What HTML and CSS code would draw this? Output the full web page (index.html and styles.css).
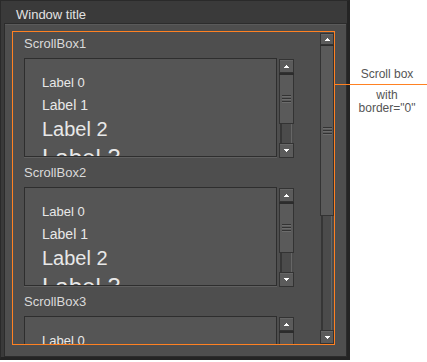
FILE: index.html
```html
<!DOCTYPE html>
<html lang="en">
<head>
    <meta charset="UTF-8" />
    <title>Scroll box</title>
    <link rel="stylesheet" href="styles.css">
</head>
<body>

<div class="window">
    <div class="title">Window title</div>
    <div class="panel">
        <!-- outer scroll box, border="0" (orange frame is the annotation highlight) -->
        <div class="scroll-box">
            <div class="viewport">
                <div class="content">

                    <div class="section">
                        <div class="caption">ScrollBox1</div>
                        <div class="box-row">
                            <div class="box">
                                <div class="label l0">Label 0</div>
                                <div class="label l1">Label 1</div>
                                <div class="label l2">Label 2</div>
                                <div class="label l3">Label 3</div>
                            </div>
                            <div class="sbar">
                                <div class="btn"><svg width="5" height="3" viewBox="0 0 5 3"><path d="M2 0h1v1h1v1h1v1H0V2h1V1h1z" fill="#fff"/></svg></div>
                                <div class="sep"></div>
                                <div class="thumb"><div class="grip"></div></div>
                                <div class="track"></div>
                                <div class="btn down"><svg width="5" height="3" viewBox="0 0 5 3"><path d="M0 0h5v1H4v1H3v1H2V2H1V1H0z" fill="#fff"/></svg></div>
                            </div>
                        </div>
                    </div>

                    <div class="section">
                        <div class="caption">ScrollBox2</div>
                        <div class="box-row">
                            <div class="box">
                                <div class="label l0">Label 0</div>
                                <div class="label l1">Label 1</div>
                                <div class="label l2">Label 2</div>
                                <div class="label l3">Label 3</div>
                            </div>
                            <div class="sbar">
                                <div class="btn"><svg width="5" height="3" viewBox="0 0 5 3"><path d="M2 0h1v1h1v1h1v1H0V2h1V1h1z" fill="#fff"/></svg></div>
                                <div class="sep"></div>
                                <div class="thumb"><div class="grip"></div></div>
                                <div class="track"></div>
                                <div class="btn down"><svg width="5" height="3" viewBox="0 0 5 3"><path d="M0 0h5v1H4v1H3v1H2V2H1V1H0z" fill="#fff"/></svg></div>
                            </div>
                        </div>
                    </div>

                    <div class="section">
                        <div class="caption">ScrollBox3</div>
                        <div class="box-row">
                            <div class="box">
                                <div class="label l0">Label 0</div>
                                <div class="label l1">Label 1</div>
                                <div class="label l2">Label 2</div>
                                <div class="label l3">Label 3</div>
                            </div>
                            <div class="sbar">
                                <div class="btn"><svg width="5" height="3" viewBox="0 0 5 3"><path d="M2 0h1v1h1v1h1v1H0V2h1V1h1z" fill="#fff"/></svg></div>
                                <div class="sep"></div>
                                <div class="thumb"><div class="grip"></div></div>
                                <div class="track"></div>
                                <div class="btn down"><svg width="5" height="3" viewBox="0 0 5 3"><path d="M0 0h5v1H4v1H3v1H2V2H1V1H0z" fill="#fff"/></svg></div>
                            </div>
                        </div>
                    </div>

                </div>
            </div>
            <div class="sbar outer">
                <div class="btn"><svg width="5" height="3" viewBox="0 0 5 3"><path d="M2 0h1v1h1v1h1v1H0V2h1V1h1z" fill="#fff"/></svg></div>
                <div class="sep"></div>
                <div class="thumb"><div class="grip"></div></div>
                <div class="track"></div>
                <div class="btn down"><svg width="5" height="3" viewBox="0 0 5 3"><path d="M0 0h5v1H4v1H3v1H2V2H1V1H0z" fill="#fff"/></svg></div>
            </div>
        </div>
    </div>
</div>

<!-- annotation -->
<div class="note">
    <div class="note-title">Scroll box</div>
    <div class="note-line"></div>
    <div class="note-text">with<br>border="0"</div>
</div>

</body>
</html>
```

FILE: styles.css
```css
body {
    margin: 0;
    background: #fff;
    font-family: "Liberation Sans", Arial, sans-serif;
}
.window {
    width: 346px;
    height: 356px;
    background: #3a3a3a;
    border: 1px solid #2a2a2a;
    border-right: 3px solid #242424;
    border-bottom: 3px solid #242424;
}
.title {
    height: 22px;
    box-sizing: border-box;
    padding: 5px 15px 0;
    line-height: 17px;
    font-size: 13px;
    color: #e2e2e2;
}
.panel {
    width: 343px;
    height: 334px;
    box-sizing: border-box;
    margin-left: 3px;
    padding: 7px;
    background: #4e4e4e;
    border: 1px solid #2c2c2c;
    box-shadow: inset 0 1px 0 #5a5a5a;
}
.scroll-box {
    width: 322px;
    height: 314px;
    box-sizing: border-box;
    display: flex;
    border: 1px solid #ff8122;
    border-right: none;
    position: relative;
}
.scroll-box::after {
    content: "";
    position: absolute;
    right: -1px;
    top: -1px;
    bottom: -1px;
    width: 1px;
    background: #ff8122;
}
.viewport {
    flex: 1;
    overflow: hidden;
}
.content {
    margin-top: -3px;
}
.caption {
    height: 29px;
    line-height: 29px;
    padding-left: 11px;
    font-size: 13px;
    color: #dadada;
}
.box-row {
    display: flex;
    margin-left: 11px;
    height: 100px;
}
.box {
    width: 253px;
    height: 99px;
    box-sizing: border-box;
    border: 1px solid #2e2e2e;
    background: #555555;
    box-shadow: 0 1px 0 #606060;
    padding: 12px 0 0 17px;
    overflow: hidden;
    color: #e8e8e8;
    white-space: nowrap;
}
.l0 { font-size: 13px; line-height: 23px; }
.l1 { font-size: 14px; line-height: 22px; }
.l2 { font-size: 20px; line-height: 26px; }
.l3 { font-size: 24px; line-height: 31px; }

/* scrollbars */
.sbar {
    width: 15px;
    height: 99px;
    margin: 1px 0 0 2px;
    display: flex;
    flex-direction: column;
}
.btn {
    height: 14px;
    box-sizing: border-box;
    background: #5b5b5b;
    border: 1px solid #333;
    box-shadow: inset 0 1px 0 #666;
    display: flex;
    align-items: center;
    justify-content: center;
}
.btn svg {
    display: block;
}
.btn.down {
    height: 15px;
}
.sep {
    height: 2px;
    background: #2c2c2c;
}
.thumb {
    height: 49px;
    box-sizing: border-box;
    background: #5a5a5a;
    border: 1px solid #333;
    border-top: none;
    display: flex;
    align-items: center;
    justify-content: center;
}
.grip {
    width: 9px;
    height: 8px;
    background: repeating-linear-gradient(to bottom, #333 0 1px, #6c6c6c 1px 2px, #5a5a5a 2px 3px);
}
.track {
    flex: 1;
    border-left: 2px solid #363636;
    margin-left: 1px;
    background: linear-gradient(to left, #4b4b4b 0 2px, #666 2px 3px, #4b4b4b 3px);
}
.sbar.outer {
    width: 14px;
    height: 312px;
    margin: 0;
    padding-top: 1px;
    box-sizing: border-box;
}
.sbar.outer .btn {
    height: 12px;
}
.sbar.outer .btn.down {
    height: 14px;
}
.sbar.outer .sep {
    height: 1px;
}
.sbar.outer .thumb {
    height: 170px;
}

/* annotation */
.note {
    position: absolute;
    left: 334px;
    top: 66px;
    width: 80px;
    padding-left: 13px;
    text-align: center;
    font-size: 12px;
    color: #555;
}
.note-title {
    line-height: 16px;
}
.note-line {
    height: 1px;
    margin: 2px 0 4px -13px;
    width: 93px;
    background: #ff8122;
}
.note-text {
    line-height: 13px;
}
```
